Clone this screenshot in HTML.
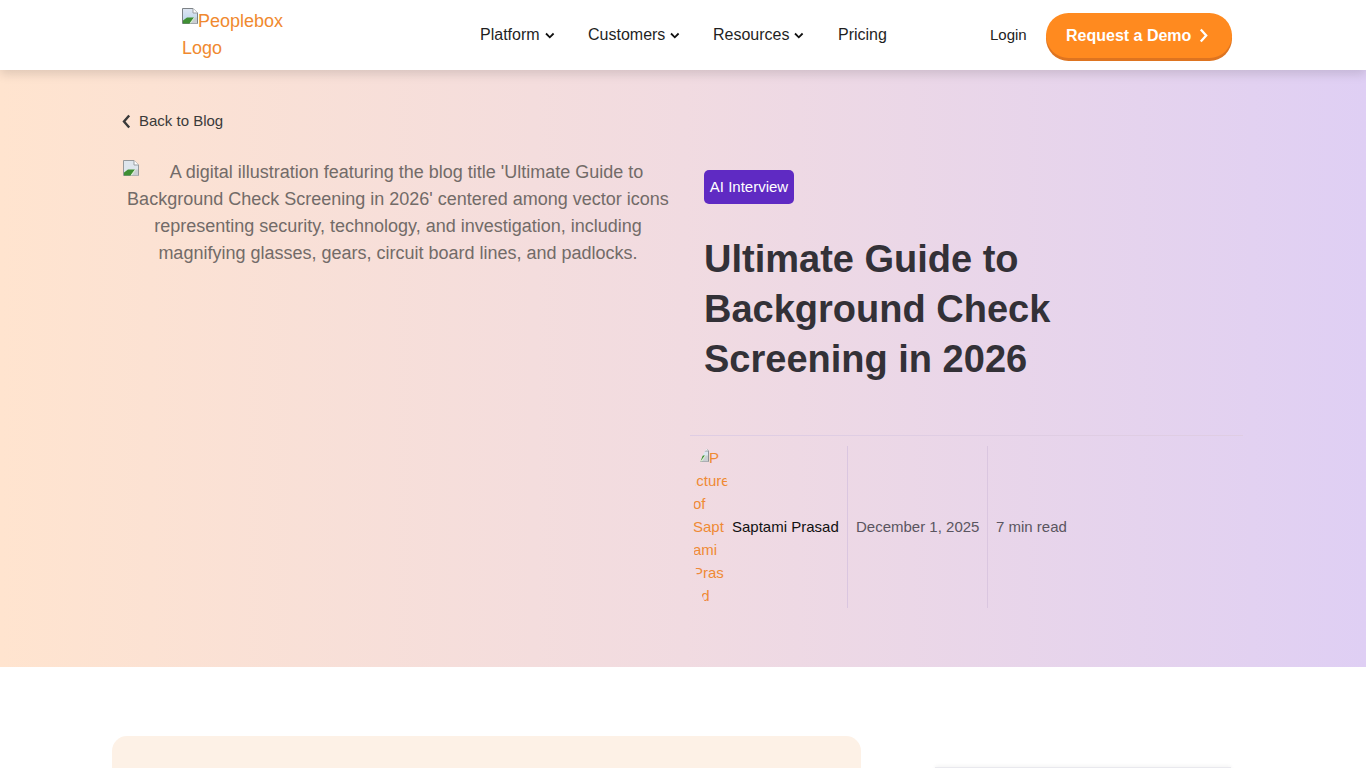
<!DOCTYPE html>
<html>
<head>
<meta charset="utf-8">
<style>
*{box-sizing:border-box;margin:0;padding:0}
html,body{width:1366px;height:768px;overflow:hidden;background:#fff;font-family:"Liberation Sans",sans-serif}
.hdr{position:absolute;left:0;top:0;width:1366px;height:70px;background:#fff;z-index:5;box-shadow:0 4px 10px rgba(0,0,0,0.13)}
.logo{position:absolute;left:182px;top:8px;width:120px;color:#f0892f;font-size:18px;line-height:27px}
.bimg{display:inline-block;width:16px;height:16px;vertical-align:3px;margin-right:0}
.nav{position:absolute;top:25px;font-size:16px;color:#1f1f1f;line-height:20px;white-space:nowrap}
.chev{display:inline-block;width:10px;height:8px;margin-left:5px;vertical-align:0px}
.login{position:absolute;left:990px;top:26px;font-size:15px;color:#222;line-height:18px}
.btn{position:absolute;left:1046px;top:13px;width:186px;height:45px;border-radius:23px;background:#ff8a1f;box-shadow:0 3px 0 #de7420;color:#fff;font-weight:bold;font-size:16px;line-height:45px;padding-left:20px;white-space:nowrap}
.hero{position:absolute;left:0;top:70px;width:1366px;height:597px;background:linear-gradient(90deg,#ffe4cf 0%,#f1dbe1 50%,#dfcff4 100%)}
.back{position:absolute;left:122px;top:112px;font-size:15px;color:#3a3a3a;line-height:18px;white-space:nowrap}
.alt{position:absolute;left:120px;top:159px;width:556px;text-align:center;font-size:18px;line-height:27px;color:#726b68}
.badge{position:absolute;left:704px;top:170px;width:90px;height:34px;border-radius:5px;background:#5f2ac3;color:#fff;font-size:15px;line-height:34px;text-align:center}
.title{position:absolute;left:704px;top:234px;font-size:38px;line-height:50px;font-weight:bold;color:#333137;white-space:nowrap}
.hr{position:absolute;left:690px;top:435px;width:553px;height:1px;background:#dfcde3}
.vr{position:absolute;top:446px;width:1px;height:162px;background:#dac6e0}
.pic{position:absolute;left:693px;top:446px;width:37px;height:161px;border-radius:50%;font-size:15px;line-height:23px;color:#ef8a35;overflow:hidden;white-space:nowrap}
.meta{position:absolute;top:518px;font-size:15px;line-height:18px;white-space:nowrap}
.card{position:absolute;left:112px;top:736px;width:749px;height:100px;border-radius:15px;background:#fdf1e6}
.side{position:absolute;left:935px;top:767px;width:296px;height:100px;background:#fff;border-top:1px solid #e9e9ee;box-shadow:0 -1px 4px rgba(0,0,0,0.05)}
</style>
</head>
<body>
<div class="hdr">
  <div class="logo"><svg class="bimg" viewBox="0 0 16 16"><defs><linearGradient id="sky" x1="0" y1="0" x2="0" y2="1"><stop offset="0" stop-color="#dfe6f2"/><stop offset="1" stop-color="#b7d3ea"/></linearGradient></defs><path d="M0.5 0.5H11L15.5 5V15.5H0.5Z" fill="url(#sky)" stroke="#7d8286" stroke-width="1"/><path d="M11 0.5V5H15.5" fill="#fff" stroke="#9a9ea2" stroke-width="1"/><path d="M1 15.5V12.5L5 9.5H12L7.5 15.5Z" fill="#3f8f33"/><path d="M7.5 15.5L12 9.5H13L9 15.5Z" fill="#d8f0c8"/><path d="M9 15.5L13 9.5H15V15.5Z" fill="#c9ced2"/></svg>Peoplebox Logo</div>
  <div class="nav" style="left:480px">Platform<svg class="chev" viewBox="0 0 10 8"><path d="M1 1.5l3.8 3.8L8.6 1.5" fill="none" stroke="#111" stroke-width="1.8"/></svg></div>
  <div class="nav" style="left:588px">Customers<svg class="chev" viewBox="0 0 10 8"><path d="M1 1.5l3.8 3.8L8.6 1.5" fill="none" stroke="#111" stroke-width="1.8"/></svg></div>
  <div class="nav" style="left:713px">Resources<svg class="chev" viewBox="0 0 10 8"><path d="M1 1.5l3.8 3.8L8.6 1.5" fill="none" stroke="#111" stroke-width="1.8"/></svg></div>
  <div class="nav" style="left:838px">Pricing</div>
  <div class="login">Login</div>
  <div class="btn">Request a Demo <svg style="display:inline-block;vertical-align:-2px;margin-left:3px" width="9" height="15" viewBox="0 0 9 15"><path d="M1.8 1.5L7.2 7.5L1.8 13.5" fill="none" stroke="#fff" stroke-width="2.3"/></svg></div>
</div>
<div class="hero"></div>
<div class="back"><svg style="display:inline-block;vertical-align:-3px;margin-right:8px" width="9" height="15" viewBox="0 0 9 15"><path d="M7.2 1.5L2 7.5L7.2 13.5" fill="none" stroke="#3a3a3a" stroke-width="2.4"/></svg>Back to Blog</div>
<div class="alt"><svg width="16" height="16" viewBox="0 0 16 16" style="position:absolute;left:3px;top:1px"><path d="M0.5 0.5H11L15.5 5V15.5H0.5Z" fill="#dbe6f0" stroke="#8d9196" stroke-width="1" opacity="0.9"/><path d="M11 0.5V5H15.5" fill="#fff" stroke="#9a9ea2" stroke-width="1"/><path d="M1 15.5V12.5L5 9.5H12L7.5 15.5Z" fill="#3f8f33"/><path d="M7.5 15.5L12 9.5H13L9 15.5Z" fill="#d8f0c8"/><path d="M9 15.5L13 9.5H15V15.5Z" fill="#c9ced2"/></svg><span style="display:inline-block;width:17px"></span>A digital illustration featuring the blog title 'Ultimate Guide to Background Check Screening in 2026' centered among vector icons representing security, technology, and investigation, including magnifying glasses, gears, circuit board lines, and padlocks.</div>
<div class="badge">AI Interview</div>
<div class="title">Ultimate Guide to<br>Background Check<br>Screening in 2026</div>
<div class="hr"></div>
<div class="pic"><svg width="16" height="16" viewBox="0 0 16 16" style="display:inline-block;vertical-align:1px"><path d="M0.5 0.5H11L15.5 5V15.5H0.5Z" fill="#dbe6f0" stroke="#8d9196" stroke-width="1"/><path d="M11 0.5V5H15.5" fill="#fff" stroke="#9a9ea2" stroke-width="1"/><path d="M1 15.5V12.5L5 9.5H12L7.5 15.5Z" fill="#3f8f33"/><path d="M7.5 15.5L12 9.5H13L9 15.5Z" fill="#d8f0c8"/><path d="M9 15.5L13 9.5H15V15.5Z" fill="#c9ced2"/></svg>P<br>icture<br>of<br>Sapt<br>ami<br>Pras<br>ad</div>
<div class="meta" style="left:732px;color:#111">Saptami Prasad</div>
<div class="vr" style="left:847px"></div>
<div class="meta" style="left:856px;color:#5a5560">December 1, 2025</div>
<div class="vr" style="left:987px"></div>
<div class="meta" style="left:996px;color:#5a5560">7 min read</div>
<div class="card"></div>
<div class="side"></div>
</body>
</html>
